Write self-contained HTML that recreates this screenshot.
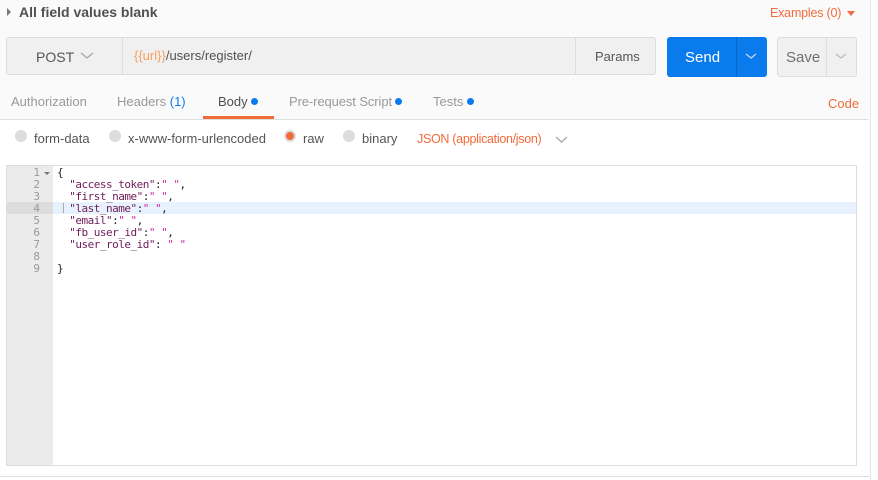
<!DOCTYPE html>
<html><head><style>
body{margin:0;width:878px;height:480px;background:#fafafa;font-family:"Liberation Sans",sans-serif;position:relative;overflow:hidden}
.a{position:absolute}
.t{font-size:13px;color:#808080}
</style></head><body>
<div class="a" style="left:870px;top:0;width:8px;height:480px;background:#fff;border-left:1px solid #e6e6e6"></div>
<div class="a" style="left:7px;top:8px;width:0;height:0;border-top:4px solid transparent;border-bottom:4px solid transparent;border-left:4px solid #777"></div>
<div class="a" style="left:19px;top:4px;font-size:14px;font-weight:bold;color:#505050">All field values blank</div>
<div class="a" style="left:770px;top:6px;font-size:12.5px;color:#f26b3a;letter-spacing:-0.2px">Examples (0)</div>
<div class="a" style="left:847px;top:11px;border-left:4px solid transparent;border-right:4px solid transparent;border-top:5px solid #f26b3a"></div>

<div class="a" style="left:6px;top:37px;width:650px;height:38px;background:#f0f0f0;border:1px solid #ddd;border-radius:3px;box-sizing:border-box"></div>
<div class="a" style="left:122px;top:37px;width:1px;height:38px;background:#ddd"></div>
<div class="a" style="left:575px;top:37px;width:1px;height:38px;background:#ddd"></div>
<div class="a" style="left:36px;top:49px;font-size:14px;color:#555">POST</div>
<svg class="a" style="left:80px;top:52px" width="14" height="8"><path d="M1 1L7 6L13 1" stroke="#aaa" stroke-width="1.4" fill="none"/></svg>
<div class="a" style="left:134px;top:48px;font-size:13px;color:#505050"><span style="color:#f7a060">{{url}}</span>/users/register/</div>
<div class="a" style="left:595px;top:49px;font-size:13px;color:#555">Params</div>
<div class="a" style="left:667px;top:37px;width:100px;height:40px;background:#097bed;border-radius:3px"></div>
<div class="a" style="left:736px;top:37px;width:1px;height:40px;background:#0866c7"></div>
<div class="a" style="left:685px;top:49px;font-size:15px;color:#fff">Send</div>
<svg class="a" style="left:745px;top:53px" width="12" height="7"><path d="M1 1L6 5L11 1" stroke="#bcd7f5" stroke-width="1.4" fill="none"/></svg>
<div class="a" style="left:777px;top:37px;width:80px;height:40px;background:#f0f0f0;border:1px solid #ddd;border-radius:3px;box-sizing:border-box"></div>
<div class="a" style="left:826px;top:37px;width:1px;height:40px;background:#ddd"></div>
<div class="a" style="left:786px;top:49px;font-size:15px;color:#707070">Save</div>
<svg class="a" style="left:835px;top:53px" width="12" height="7"><path d="M1 1L6 5L11 1" stroke="#bbb" stroke-width="1.2" fill="none"/></svg>

<div class="a t" style="left:11px;top:94px;color:#999">Authorization</div>
<div class="a t" style="left:117px;top:94px;color:#999">Headers <span style="color:#097bed">(1)</span></div>
<div class="a t" style="left:218px;top:94px;color:#505050">Body</div>
<div class="a" style="left:251px;top:98px;width:7px;height:7px;border-radius:50%;background:#097bed"></div>
<div class="a" style="left:203px;top:116px;width:71px;height:3px;background:#f26b3a"></div>
<div class="a t" style="left:289px;top:94px;color:#999;letter-spacing:-0.1px">Pre-request Script</div>
<div class="a" style="left:395px;top:98px;width:7px;height:7px;border-radius:50%;background:#097bed"></div>
<div class="a t" style="left:433px;top:94px;color:#999">Tests</div>
<div class="a" style="left:467px;top:98px;width:7px;height:7px;border-radius:50%;background:#097bed"></div>
<div class="a" style="left:828px;top:96px;font-size:13px;color:#f26b3a">Code</div>
<div class="a" style="left:0;top:119px;width:868px;height:1px;background:#ddd"></div>
<div class="a" style="left:0;top:120px;width:869px;height:360px;background:#fff"></div>

<div class="a" style="left:15px;top:130px;width:12px;height:12px;border-radius:50%;background:#ddd"></div>
<div class="a t" style="left:34px;top:131px;color:#555">form-data</div>
<div class="a" style="left:109px;top:130px;width:12px;height:12px;border-radius:50%;background:#ddd"></div>
<div class="a t" style="left:128px;top:131px;color:#555">x-www-form-urlencoded</div>
<div class="a" style="left:284px;top:130px;width:8px;height:8px;border-radius:50%;background:#f26b3a;border:2px solid #ddd"></div>
<div class="a t" style="left:303px;top:131px;color:#555">raw</div>
<div class="a" style="left:343px;top:130px;width:12px;height:12px;border-radius:50%;background:#ddd"></div>
<div class="a t" style="left:362px;top:131px;color:#555">binary</div>
<div class="a" style="left:417px;top:132px;font-size:12.5px;color:#f26b3a;letter-spacing:-0.3px">JSON (application/json)</div>
<svg class="a" style="left:555px;top:136px" width="13" height="8"><path d="M1 1L6.5 6L12 1" stroke="#aaa" stroke-width="1.4" fill="none"/></svg>

<div class="a" style="left:6px;top:165px;width:851px;height:301px;border:1px solid #ddd;box-sizing:border-box;background:#fff"></div>
<div class="a" style="left:7px;top:166px;width:46px;height:299px;background:#ebebeb"></div>
<div class="a" style="left:7px;top:202px;width:849px;height:12px;background:#e8f2fe"></div>
<div class="a" style="left:7px;top:202px;width:46px;height:12px;background:#dcdcdc"></div>
<div class="a" style="left:0;top:476px;width:869px;height:1px;background:#ddd"></div>
<pre class="a" style="margin:0;left:18px;top:167px;font:11px/12px 'DejaVu Sans Mono',monospace;color:#999;text-align:right;width:22px">1
2
3
4
5
6
7
8
9</pre>
<div class="a" style="left:44px;top:172px;border-left:3px solid transparent;border-right:3px solid transparent;border-top:3px solid #777"></div>
<div class="a" style="left:63px;top:203px;width:1px;height:10px;background:#aaa"></div>
<pre class="a" style="margin:0;left:57px;top:167px;font:11px/12px 'DejaVu Sans Mono',monospace;color:#222;letter-spacing:-0.5px">{
  <span style="color:#6d1c59">"access_token"</span>:<span style="color:#c82ca0">" "</span>,
  <span style="color:#6d1c59">"first_name"</span>:<span style="color:#c82ca0">" "</span>,
  <span style="color:#6d1c59">"last_name"</span>:<span style="color:#c82ca0">" "</span>,
  <span style="color:#6d1c59">"email"</span>:<span style="color:#c82ca0">" "</span>,
  <span style="color:#6d1c59">"fb_user_id"</span>:<span style="color:#c82ca0">" "</span>,
  <span style="color:#6d1c59">"user_role_id"</span>: <span style="color:#c82ca0">" "</span>

}</pre>
</body></html>
